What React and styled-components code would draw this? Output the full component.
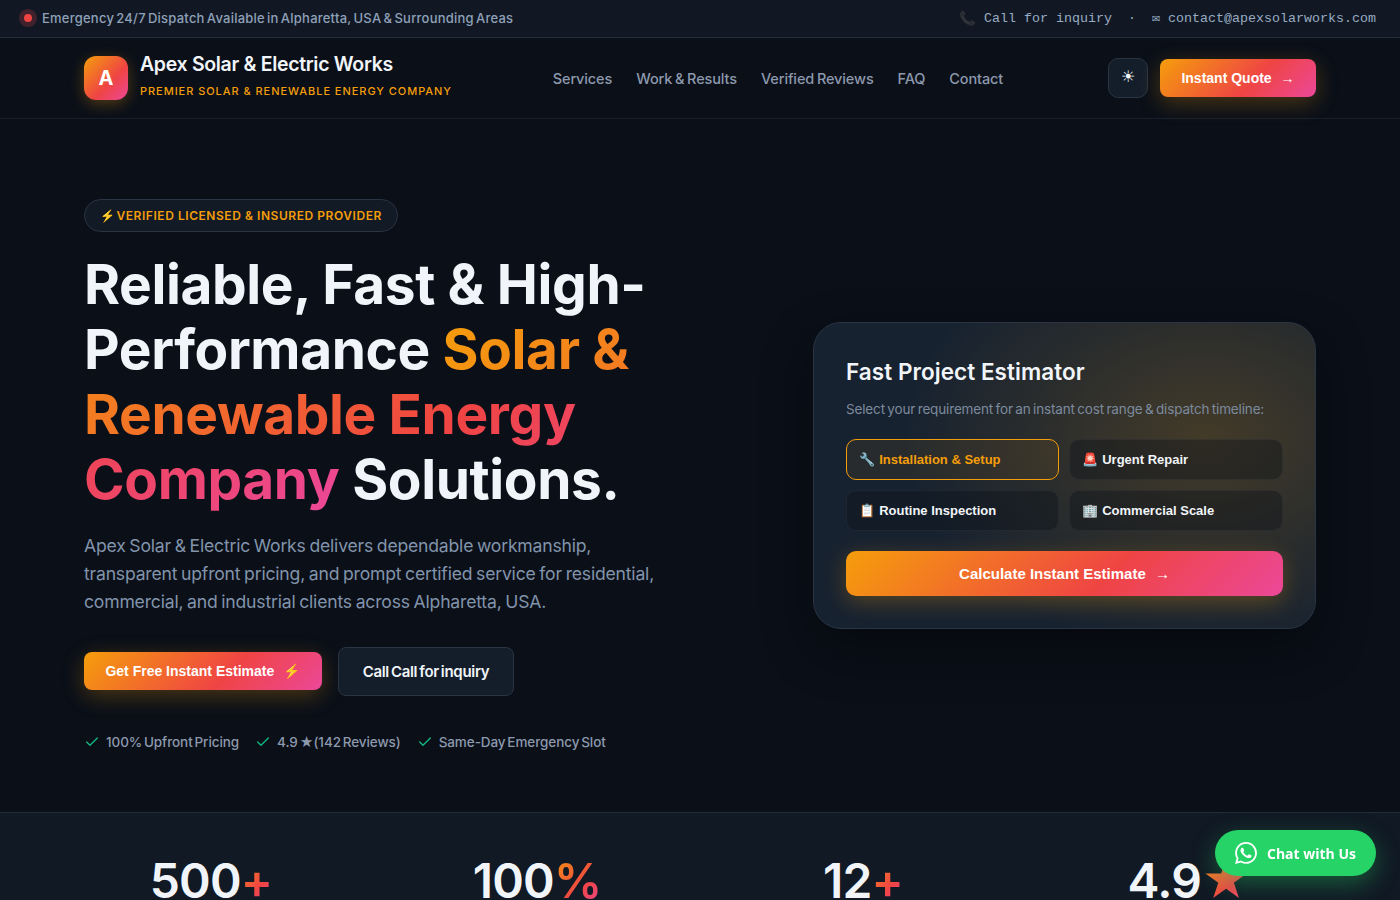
import React from 'react';
import styled, { createGlobalStyle } from 'styled-components';

const Sans = `Inter, "Noto Sans", sans-serif`;
const Display = `Inter, "Noto Sans", sans-serif`;
const Emoji = `"Noto Color Emoji"`;
const brand = 'linear-gradient(135deg, #f59e0b 0%, #ef4444 60%, #ec4899 100%)';

const GlobalStyle = createGlobalStyle`
	html, body {
		margin: 0;
		padding: 0;
		background: #0a0f18;
		overflow: hidden;
	}
	* {
		box-sizing: border-box;
	}
`;

const App = () => (
	<Page>
		<GlobalStyle />
		<TopBar>
			<Alert>
				<Dot />
				Emergency 24/7 Dispatch Available in Alpharetta, USA &amp; Surrounding Areas
			</Alert>
			<Contacts>
				<PhoneIcon>📞</PhoneIcon>
				<span>Call for inquiry</span>
				<Sep>·</Sep>
				<span>✉ contact@apexsolarworks.com</span>
			</Contacts>
		</TopBar>

		<Nav>
			<Brand>
				<LogoMark>A</LogoMark>
				<BrandText>
					<BrandName>Apex Solar &amp; Electric Works</BrandName>
					<BrandTag>Premier Solar &amp; Renewable Energy Company</BrandTag>
				</BrandText>
			</Brand>
			<NavLinks>
				<NavLink>Services</NavLink>
				<NavLink>Work &amp; Results</NavLink>
				<NavLink>Verified Reviews</NavLink>
				<NavLink>FAQ</NavLink>
				<NavLink>Contact</NavLink>
			</NavLinks>
			<NavActions>
				<ThemeButton>☀</ThemeButton>
				<QuoteButton>
					Instant Quote <Arrow>→</Arrow>
				</QuoteButton>
			</NavActions>
		</Nav>

		<Hero>
			<HeroCopy>
				<Pill>
					<PillBolt>⚡</PillBolt> VERIFIED LICENSED &amp; INSURED PROVIDER
				</Pill>
				<Headline>
					Reliable, Fast &amp; High-
					<br />
					Performance <GradientText>Solar &amp;
					<br />
					Renewable Energy
					<br />
					Company</GradientText> Solutions.
				</Headline>
				<Lead>
					Apex Solar &amp; Electric Works delivers dependable workmanship,
					<br />
					transparent upfront pricing, and prompt certified service for residential,
					<br />
					commercial, and industrial clients across Alpharetta, USA.
				</Lead>
				<HeroActions>
					<PrimaryButton>
						Get Free Instant Estimate <BoltIcon>⚡</BoltIcon>
					</PrimaryButton>
					<SecondaryButton>Call Call for inquiry</SecondaryButton>
				</HeroActions>
				<TrustRow>
					<TrustItem>
						<Check /> 100% Upfront Pricing
					</TrustItem>
					<TrustItem>
						<Check />
						<span>
							4.9 <TrustStar>★</TrustStar> (142 Reviews)
						</span>
					</TrustItem>
					<TrustItem>
						<Check /> Same-Day Emergency Slot
					</TrustItem>
				</TrustRow>
			</HeroCopy>

			<Estimator>
				<EstimatorTitle>Fast Project Estimator</EstimatorTitle>
				<EstimatorText>
					Select your requirement for an instant cost range &amp; dispatch timeline:
				</EstimatorText>
				<Options>
					<Option $active>
						<OptionIcon>🔧</OptionIcon> Installation &amp; Setup
					</Option>
					<Option>
						<OptionIcon>🚨</OptionIcon> Urgent Repair
					</Option>
					<Option>
						<OptionIcon>📋</OptionIcon> Routine Inspection
					</Option>
					<Option>
						<OptionIcon>🏢</OptionIcon> Commercial Scale
					</Option>
				</Options>
				<CalcButton>
					Calculate Instant Estimate <Arrow>→</Arrow>
				</CalcButton>
			</Estimator>
		</Hero>

		<Stats>
			<StatsGrid>
				<StatNumber>
					500<GradientText>+</GradientText>
				</StatNumber>
				<StatNumber>
					100<GradientText>%</GradientText>
				</StatNumber>
				<StatNumber>
					12<GradientText>+</GradientText>
				</StatNumber>
				<StatNumber>
					4.9<GradientText>★</GradientText>
				</StatNumber>
			</StatsGrid>
		</Stats>

		<ChatButton>
			<WhatsApp />
			Chat with Us
		</ChatButton>
	</Page>
);

export default App;

const Check = () => (
	<svg width="16" height="16" viewBox="0 0 24 24" fill="none" stroke="#10b981" strokeWidth="2" strokeLinecap="round" strokeLinejoin="round">
		<path d="M20 6 9 17l-5-5" />
	</svg>
);

const WhatsApp = () => (
	<svg width="22" height="22" viewBox="0 0 24 24" fill="#fff">
		<path d="M17.47 14.38c-.3-.15-1.76-.87-2.03-.97-.27-.1-.47-.15-.67.15-.2.3-.77.97-.94 1.16-.17.2-.35.22-.65.07-.3-.15-1.26-.46-2.39-1.48-.88-.79-1.48-1.76-1.65-2.06-.17-.3-.02-.46.13-.61.13-.13.3-.35.45-.52.15-.17.2-.3.3-.5.1-.2.05-.37-.02-.52-.08-.15-.67-1.61-.92-2.21-.24-.58-.49-.5-.67-.51h-.57c-.2 0-.52.07-.79.37-.27.3-1.04 1.02-1.04 2.48s1.07 2.88 1.22 3.07c.15.2 2.1 3.2 5.08 4.49.71.3 1.26.49 1.69.62.71.23 1.36.2 1.87.12.57-.09 1.76-.72 2.01-1.41.25-.7.25-1.29.17-1.41-.07-.13-.27-.2-.57-.35zM12.05 21.79h-.01a9.87 9.87 0 0 1-5.03-1.38l-.36-.21-3.74.98 1-3.65-.24-.37a9.86 9.86 0 0 1-1.51-5.26c0-5.45 4.44-9.88 9.89-9.88 2.64 0 5.12 1.03 6.99 2.9a9.83 9.83 0 0 1 2.89 6.99c0 5.45-4.44 9.88-9.88 9.88zM20.46 3.49A11.82 11.82 0 0 0 12.05 0C5.5 0 .16 5.34.16 11.89c0 2.1.55 4.14 1.59 5.95L.06 24l6.31-1.65a11.88 11.88 0 0 0 5.68 1.45h.01c6.55 0 11.89-5.34 11.89-11.89 0-3.18-1.24-6.16-3.49-8.41z" />
	</svg>
);

const Page = styled.div`
	width: 1400px;
	height: 900px;
	overflow: hidden;
	background: #0a0f18;
	color: #f1f5f9;
	font-family: ${Sans};
`;

const TopBar = styled.div`
	height: 38px;
	padding: 0 24px 1px;
	display: flex;
	align-items: center;
	justify-content: space-between;
	background: #111824;
	border-bottom: 1px solid #232c39;
`;

const Alert = styled.div`
	display: flex;
	align-items: center;
	gap: 10px;
	font-size: 13px;
	font-weight: 500;
	letter-spacing: 0.23px;
	word-spacing: -1.5px;
	color: #8fa1b8;
`;

const Dot = styled.span`
	width: 8px;
	height: 8px;
	border-radius: 50%;
	background: #ef4444;
	box-shadow: 0 0 0 5px rgba(239, 68, 68, 0.22);
`;

const Contacts = styled.div`
	display: flex;
	align-items: center;
	font-family: 'Liberation Mono', monospace;
	font-size: 13.33px;
	color: #98abc2;
`;

const PhoneIcon = styled.span`
	font-family: ${Emoji}, sans-serif;
	margin-right: 8px;
	opacity: 0.45;
	filter: grayscale(1);
`;

const Sep = styled.span`
	margin: 0 16px;
`;

const Nav = styled.nav`
	height: 81px;
	padding: 0 84px;
	display: flex;
	align-items: center;
	justify-content: space-between;
	background: #0a0f18;
	border-bottom: 1px solid #19202b;
`;

const Brand = styled.div`
	display: flex;
	align-items: center;
	gap: 12px;
`;

const BrandText = styled.div`
	padding-top: 2px;
`;

const LogoMark = styled.div`
	width: 44px;
	height: 44px;
	border-radius: 12px;
	display: flex;
	align-items: center;
	justify-content: center;
	background: ${brand};
	color: #fff;
	font-family: ${Display};
	font-size: 20px;
	font-weight: 700;
	box-shadow: 0 4px 15px rgba(245, 158, 11, 0.3);
`;

const BrandName = styled.div`
	font-family: ${Display};
	font-size: 19.5px;
	font-weight: 600;
	line-height: 25px;
	letter-spacing: -0.32px;
	color: #f1f5f9;
`;

const BrandTag = styled.div`
	font-size: 11px;
	font-weight: 500;
	line-height: 29px;
	letter-spacing: 0.95px;
	text-transform: uppercase;
	color: #f59e0b;
`;

const NavLinks = styled.div`
	margin-right: 4px;
	display: flex;
	align-items: center;
	gap: 24px;
`;

const NavLink = styled.a`
	font-size: 14.5px;
	font-weight: 500;
	letter-spacing: -0.12px;
	word-spacing: -1px;
	color: #8d99ad;
`;

const NavActions = styled.div`
	display: flex;
	align-items: center;
	gap: 12px;
`;

const ThemeButton = styled.button`
	width: 40px;
	height: 40px;
	padding: 0 0 3px;
	border-radius: 10px;
	border: 1px solid #2a3442;
	background: #141e2b;
	color: #f1f5f9;
	font-size: 16px;
`;

const BaseButton = styled.button`
	border: none;
	color: #fff;
	font-family: 'Liberation Sans', Arial, sans-serif;
	font-weight: 700;
	background: ${brand};
	box-shadow: 0 6px 22px rgba(245, 158, 11, 0.28);
`;

const QuoteButton = styled(BaseButton)`
	width: 156px;
	height: 38px;
	border-radius: 8px;
	font-size: 14px;
`;

const Arrow = styled.span`
	margin-left: 5px;
	font-weight: 400;
`;

const Hero = styled.section`
	height: 693px;
	padding: 80px 84px 0;
	display: grid;
	grid-template-columns: minmax(0, 1fr) 503px;
	gap: 64px;
	align-items: start;
	background: #0a0f18;
`;

const HeroCopy = styled.div`
	display: flex;
	flex-direction: column;
	align-items: flex-start;
`;

const Pill = styled.div`
	height: 33px;
	padding: 0 15px;
	display: flex;
	align-items: center;
	gap: 1px;
	border-radius: 17px;
	border: 1px solid #2a3442;
	background: #121a26;
	font-size: 12px;
	font-weight: 600;
	letter-spacing: 0.55px;
	color: #f59e0b;
`;

const PillBolt = styled.span`
	font-family: ${Emoji}, sans-serif;
	font-size: 12px;
`;

const Headline = styled.h1`
	margin: 20px 0 0;
	font-family: ${Display};
	font-size: 55px;
	font-weight: 700;
	line-height: 65px;
	letter-spacing: -0.38px;
	color: #f1f5f9;
	white-space: nowrap;
`;

const GradientText = styled.span`
	background: ${brand};
	-webkit-background-clip: text;
	background-clip: text;
	color: transparent;
`;

const Lead = styled.p`
	margin: 20px 0 0;
	font-size: 17.6px;
	line-height: 28px;
	letter-spacing: -0.2px;
	word-spacing: -1px;
	color: #8294ab;
	white-space: nowrap;
`;

const HeroActions = styled.div`
	margin-top: 31px;
	display: flex;
	align-items: flex-start;
	gap: 16px;
`;

const PrimaryButton = styled(BaseButton)`
	margin-top: 5px;
	width: 238px;
	height: 38px;
	border-radius: 8px;
	font-size: 14px;
`;

const BoltIcon = styled.span`
	margin-left: 5px;
	font-family: ${Emoji}, sans-serif;
`;

const SecondaryButton = styled.button`
	width: 176px;
	height: 49px;
	border-radius: 8px;
	border: 1px solid #2a3442;
	background: #141e2b;
	color: #f1f5f9;
	font-family: ${Sans};
	font-size: 15px;
	font-weight: 600;
	letter-spacing: -0.3px;
	word-spacing: -1.5px;
`;

const TrustRow = styled.div`
	margin-top: 38px;
	display: flex;
	align-items: center;
	gap: 16px;
`;

const TrustItem = styled.div`
	display: flex;
	align-items: center;
	gap: 6px;
	font-size: 13.5px;
	font-weight: 500;
	letter-spacing: -0.08px;
	word-spacing: -1.7px;
	color: #8d99ad;
`;

const TrustStar = styled.span`
	letter-spacing: -2px;
`;

const Estimator = styled.div`
	margin-top: 123px;
	height: 307px;
	padding: 32px;
	border-radius: 28px;
	border: 1px solid #2a3442;
	background: radial-gradient(ellipse 60% 70% at 78% 38%, rgba(245, 158, 11, 0.2), transparent 100%), #172230;
	box-shadow: 0 20px 50px rgba(0, 0, 0, 0.4);
`;

const EstimatorTitle = styled.h3`
	margin: 0;
	font-family: ${Display};
	font-size: 22.5px;
	font-weight: 600;
	line-height: 34px;
	letter-spacing: 0.05px;
	color: #f1f5f9;
`;

const EstimatorText = styled.p`
	margin: 10px 0 0;
	font-size: 13.5px;
	line-height: 20px;
	letter-spacing: -0.15px;
	word-spacing: -1.2px;
	color: #7c8a9e;
`;

const Options = styled.div`
	margin-top: 20px;
	display: grid;
	grid-template-columns: 213px 214px;
	gap: 10px;
`;

const Option = styled.button`
	height: 41px;
	padding: 0 12px;
	display: flex;
	align-items: center;
	gap: 4px;
	border-radius: 10px;
	border: 1px solid ${(p) => (p.$active ? '#f59e0b' : 'rgba(255, 255, 255, 0.05)')};
	background: ${(p) => (p.$active ? 'rgba(245, 158, 11, 0.08)' : 'rgba(10, 15, 24, 0.38)')};
	color: ${(p) => (p.$active ? '#f59e0b' : '#f1f5f9')};
	font-family: 'Liberation Sans', Arial, sans-serif;
	font-size: 13px;
	font-weight: 700;
`;

const OptionIcon = styled.span`
	font-family: ${Emoji}, sans-serif;
`;

const CalcButton = styled(BaseButton)`
	margin-top: 20px;
	width: 100%;
	height: 45px;
	border-radius: 10px;
	font-size: 15px;
`;

const Stats = styled.section`
	height: 88px;
	padding: 0 84px;
	background: #111924;
	border-top: 1px solid #232c39;
`;

const StatsGrid = styled.div`
	padding-top: 38px;
	display: grid;
	grid-template-columns: repeat(4, 1fr);
	gap: 72px;
`;

const StatNumber = styled.div`
	font-family: ${Display};
	font-size: 48px;
	font-weight: 600;
	line-height: 60px;
	letter-spacing: -0.8px;
	text-align: center;
	color: #f1f5f9;
`;

const ChatButton = styled.a`
	position: fixed;
	right: 24px;
	bottom: 24px;
	height: 46px;
	padding: 0 20px;
	display: flex;
	align-items: center;
	gap: 10px;
	border-radius: 23px;
	background: #25d366;
	color: #fff;
	font-family: 'Open Sans', sans-serif;
	font-size: 14px;
	font-weight: 700;
	box-shadow: 0 8px 25px rgba(37, 211, 102, 0.35);
`;
